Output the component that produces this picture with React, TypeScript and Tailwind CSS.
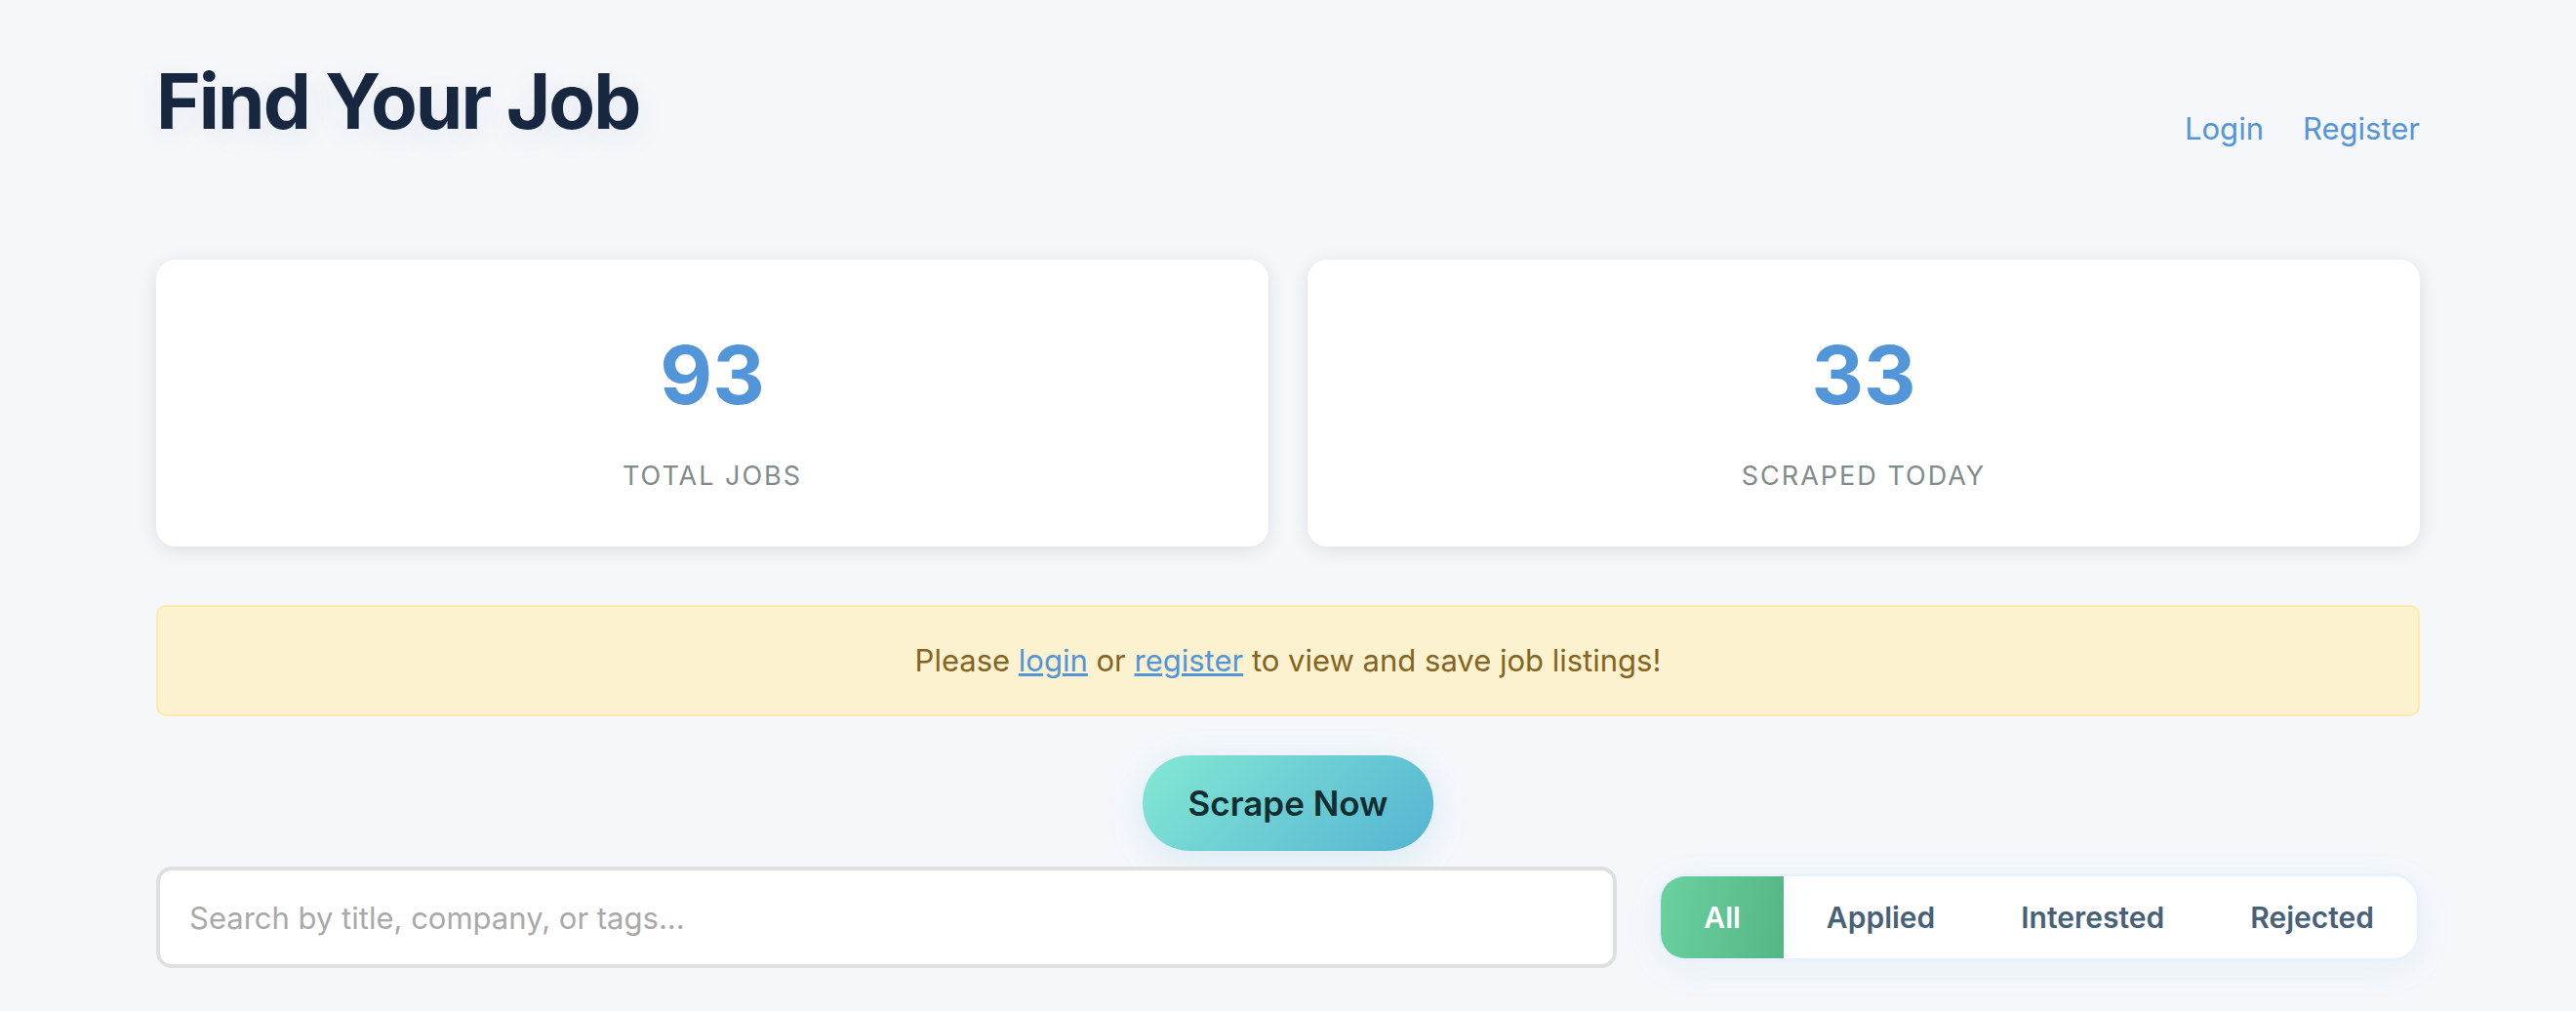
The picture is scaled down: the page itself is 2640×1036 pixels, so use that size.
import React from "react";

const stats = [
  { value: "93", label: "Total Jobs" },
  { value: "33", label: "Scraped Today" },
];

const filters = ["All", "Applied", "Interested", "Rejected"];

export default function App() {
  const [active, setActive] = React.useState("All");
  return (
    <div className="min-h-screen bg-[#f5f7fb] px-40 pt-12 pb-11 font-['Inter',sans-serif] text-[31px] leading-[52px]">
      <header className="flex items-end justify-between">
        <h1 className="text-[78px] leading-[112px] font-bold tracking-tight text-[#16273f] [text-shadow:0_8px_32px_rgba(44,62,80,0.08)]">
          Find Your Job
        </h1>
        <nav className="flex gap-10 pb-0.5 text-[#5295d8]">
          <a href="#login">Login</a>
          <a href="#register">Register</a>
        </nav>
      </header>

      <main>
        <section className="mt-[106px] grid grid-cols-2 gap-10">
          {stats.map((s) => (
            <div
              key={s.label}
              className="flex flex-col items-center rounded-[20px] bg-white pt-[50px] pb-12 shadow-[0_4px_20px_rgba(0,0,0,0.1)]"
            >
              <div className="text-[83px] leading-[136px] font-bold text-[#5295d8]">{s.value}</div>
              <div className="mt-3 text-[27px] leading-[48px] tracking-[2px] text-[#7f8c8a] uppercase">
                {s.label}
              </div>
            </div>
          ))}
        </section>

        <p className="mt-[60px] rounded-[10px] border-2 border-[#fdeaac] bg-[#fdf2d0] py-[29px] text-center text-[#856421]">
          Please{" "}
          <a href="#login" className="text-[#5295d8] underline">
            login
          </a>{" "}
          or{" "}
          <a href="#register" className="text-[#5295d8] underline">
            register
          </a>{" "}
          to view and save job listings!
        </p>

        <div className="mt-10 flex justify-center">
          <button
            type="button"
            className="h-[98px] rounded-[48px] bg-linear-[135deg,#84e8d4,#54b4d3] px-[47px] text-[35px] font-semibold text-[#132e30] shadow-[0_8px_36px_rgba(84,180,211,0.18)]"
          >
            Scrape Now
          </button>
        </div>

        <div className="mt-4 flex items-center gap-[42px]">
          <input
            type="search"
            aria-label="Search jobs"
            placeholder="Search by title, company, or tags..."
            className="relative h-[104px] min-w-0 flex-1 rounded-2xl border-4 border-[#dfdfdf] bg-white px-[30px] placeholder:text-[#a9a9a9]"
          />
          <div className="flex overflow-hidden rounded-[28px] border-3 border-[#e8f1fd] bg-white shadow-[0_8px_36px_rgba(72,160,160,0.08)]">
            {filters.map((f) => (
              <button
                key={f}
                type="button"
                aria-pressed={active === f}
                onClick={() => setActive(f)}
                className={
                  active === f
                    ? "h-[84px] bg-linear-[100deg,#6ad1a0,#55b685] px-11 text-[30px] font-semibold text-white shadow-[0_4px_24px_rgba(85,182,133,0.12)]"
                    : "h-[84px] px-11 text-[30px] font-semibold text-[#476278]"
                }
              >
                {f}
              </button>
            ))}
          </div>
        </div>
      </main>
    </div>
  );
}
